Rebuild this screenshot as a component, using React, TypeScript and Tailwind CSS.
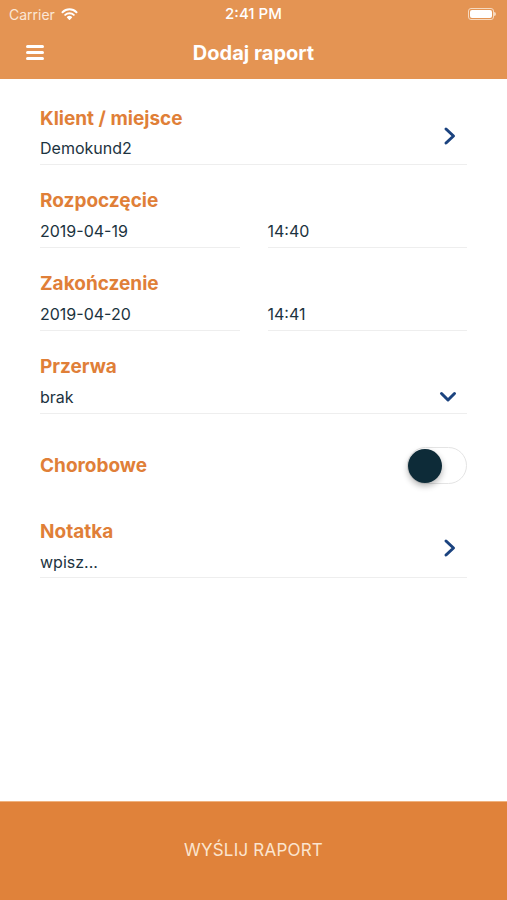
import React from 'react';

function Chevron() {
    return (
        <svg width="14" height="20" viewBox="0 0 14 20" fill="none">
            <path d="M3 3 L10.5 10 L3 17" stroke="#1b437f" strokeWidth="3" strokeLinecap="round" strokeLinejoin="round" />
        </svg>
    );
}

function ChevronDown() {
    return (
        <svg width="18" height="12" viewBox="0 0 18 12" fill="none">
            <path d="M2.5 2.5 L9 9 L15.5 2.5" stroke="#1b437f" strokeWidth="3" strokeLinecap="round" strokeLinejoin="round" />
        </svg>
    );
}

function Label({ children }: { children: React.ReactNode }) {
    return <p className="h-[24px] leading-[24px] text-[19px] font-bold text-[#e07f38]">{children}</p>;
}

function Value({ children }: { children: React.ReactNode }) {
    return <p className="h-[22px] leading-[22px] text-[16px] text-[#1c3340]">{children}</p>;
}

export default function App() {
    return (
        <div className="w-[507px] h-[900px] flex flex-col bg-white" style={{ fontFamily: 'Inter, "Noto Sans", sans-serif' }}>
            {/* HEADER */}
            <header className="bg-[#e49453] text-white shrink-0">
                <div className="relative h-[28px] flex items-center px-[9px] text-[14px]">
                    <span className="text-[#fbe7d6]">Carrier</span>
                    <svg className="ml-[6px]" width="17" height="12" viewBox="0 0 17 12" fill="none">
                        <path d="M1.5 4.2 A10 10 0 0 1 15.5 4.2" stroke="white" strokeWidth="2" strokeLinecap="round" />
                        <path d="M4.2 6.9 A6.2 6.2 0 0 1 12.8 6.9" stroke="white" strokeWidth="2" strokeLinecap="round" />
                        <path d="M6.6 9.3 A2.8 2.8 0 0 1 10.4 9.3 L8.5 11.2 Z" fill="white" stroke="white" strokeWidth="1.4" strokeLinejoin="round" />
                    </svg>
                    <span className="absolute left-0 right-0 text-center font-medium text-[15px]">2:41 PM</span>
                    <div className="ml-auto mr-[2px] flex items-center">
                        <div className="w-[26px] h-[12px] rounded-[3px] border border-[#f6d9bf] p-[1px]">
                            <div className="w-full h-full rounded-[2px] bg-white" />
                        </div>
                        <div className="w-[2px] h-[4px] bg-[#f6d9bf] rounded-r-sm" />
                    </div>
                </div>
                <div className="relative h-[51px] flex items-center px-[26px]">
                    <div className="flex flex-col gap-[3px] mb-[2px]">
                        <span className="block w-[18px] h-[3px] bg-white rounded-sm" />
                        <span className="block w-[18px] h-[3px] bg-white rounded-sm" />
                        <span className="block w-[18px] h-[3px] bg-white rounded-sm" />
                    </div>
                    <h1 className="absolute left-0 right-0 text-center text-[20px] font-bold mb-[2px]">Dodaj raport</h1>
                </div>
            </header>

            {/* FORM */}
            <main className="flex-1 px-[40px] pt-[4px]">
                <div className="pt-[24px] flex items-center border-b border-[#eeeeee]">
                    <div className="flex-1 pb-[5px]">
                        <Label>Klient / miejsce</Label>
                        <div className="mt-[6px]"><Value>Demokund2</Value></div>
                    </div>
                    <div className="mr-[10px] mb-[0px]"><Chevron /></div>
                </div>

                <div className="pt-[24px]">
                    <Label>Rozpoczęcie</Label>
                    <div className="mt-[7px] grid grid-cols-2 gap-[28px]">
                        <div className="pb-[5px] border-b border-[#eeeeee]"><Value>2019-04-19</Value></div>
                        <div className="pb-[5px] border-b border-[#eeeeee]"><Value>14:40</Value></div>
                    </div>
                </div>

                <div className="pt-[24px]">
                    <Label>Zakończenie</Label>
                    <div className="mt-[7px] grid grid-cols-2 gap-[28px]">
                        <div className="pb-[5px] border-b border-[#eeeeee]"><Value>2019-04-20</Value></div>
                        <div className="pb-[5px] border-b border-[#eeeeee]"><Value>14:41</Value></div>
                    </div>
                </div>

                <div className="pt-[24px] border-b border-[#eeeeee] pb-[5px]">
                    <Label>Przerwa</Label>
                    <div className="mt-[7px] flex items-center justify-between">
                        <Value>brak</Value>
                        <div className="mr-[10px]"><ChevronDown /></div>
                    </div>
                </div>

                <div className="pt-[33px] pb-[12px] flex items-center justify-between">
                    <Label>Chorobowe</Label>
                    <div className="w-[60px] h-[37px] rounded-full border border-[#e4e4e4] bg-white flex items-center">
                        <div className="w-[34px] h-[34px] rounded-full bg-[#0d2b38] shadow-[0_3px_6px_rgba(0,0,0,0.3)]" />
                    </div>
                </div>

                <div className="pt-[24px] flex items-center border-b border-[#eeeeee]">
                    <div className="flex-1 pb-[4px]">
                        <Label>Notatka</Label>
                        <div className="mt-[7px]"><Value>wpisz...</Value></div>
                    </div>
                    <div className="mr-[10px] mb-[2px]"><Chevron /></div>
                </div>
            </main>

            {/* BUTTON */}
            <button className="h-[99px] shrink-0 bg-[#e0823a] border-t border-[#f0b27e] text-[#fbe5cf] text-[17px] tracking-[0.2px]">
                WYŚLIJ RAPORT
            </button>
        </div>
    );
}
